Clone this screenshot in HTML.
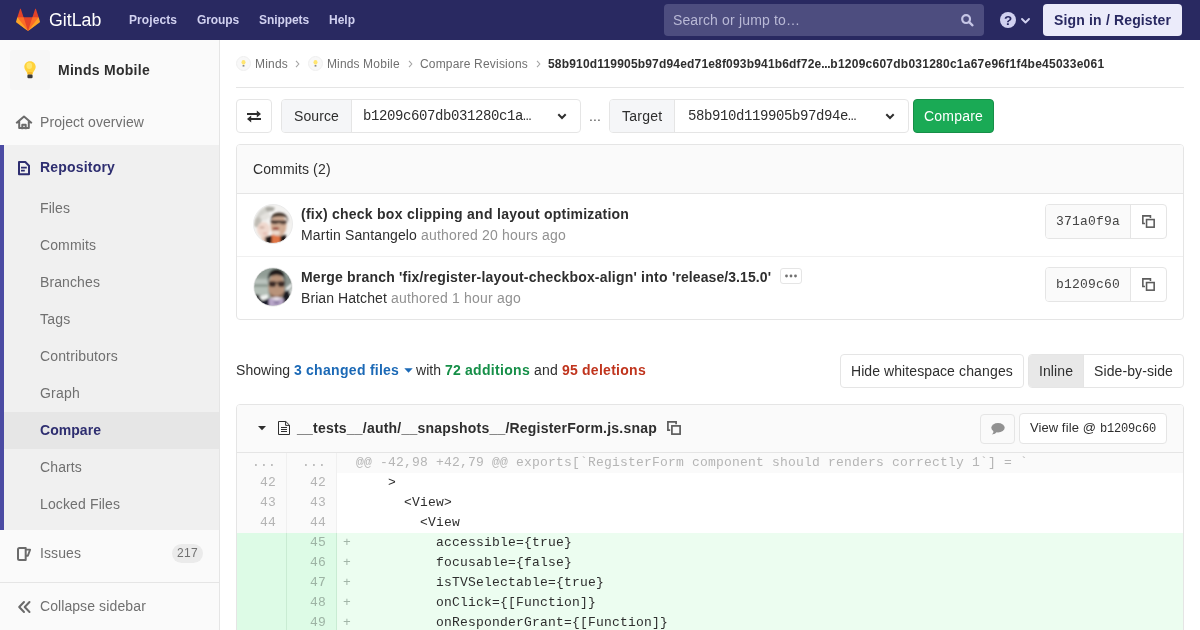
<!DOCTYPE html>
<html>
<head>
<meta charset="utf-8">
<title>Compare Revisions</title>
<style>
*{box-sizing:border-box;margin:0;padding:0}
html,body{width:1200px;height:630px;overflow:hidden;background:#fff}
body{font-family:"Liberation Sans",sans-serif;font-size:14px;color:#2e2e2e;position:relative}
.mono{font-family:"Liberation Mono",monospace}
svg{position:absolute;display:block;overflow:visible}
#hdr{position:absolute;left:0;top:0;width:1200px;height:40px;background:#292961}
#hdr .nav{position:absolute;top:0;height:40px;line-height:40px;font-size:12px;font-weight:bold;color:#d1d1f0;white-space:nowrap}
#logo-text{position:absolute;left:49px;top:0;height:40px;line-height:40.400px;font-size:19.200px;color:#fff;white-space:nowrap;transform:scaleX(0.925);transform-origin:0 0}
#search{position:absolute;left:664px;top:4px;width:320px;height:32px;border-radius:4px;background:#4d4d7f;color:#b9b9d6;font-size:14px;line-height:32px;padding-left:9px;white-space:nowrap}
#signin{position:absolute;left:1043px;top:4px;width:139px;height:32px;border-radius:4px;background:#ebebfa;color:#292961;font-size:14px;font-weight:bold;line-height:32px;text-align:center;white-space:nowrap}
#side{position:absolute;left:0;top:40px;width:220px;height:590px;background:#fafafa;border-right:1px solid #e5e5e5}
#side .it{position:absolute;left:40px;font-size:14px;color:#707070;white-space:nowrap;line-height:20px;height:20px}
#active{position:absolute;left:0;top:105px;width:219px;height:385px;background:#f0f0f0;border-left:4px solid #4b4ba3}
#sel{position:absolute;left:4px;top:372px;width:215px;height:37px;background:#e6e6e6}
.t{position:absolute;white-space:nowrap;line-height:20px;height:20px}
.box{position:absolute;border:1px solid #e5e5e5;border-radius:4px;background:#fff}
.btn{position:absolute;border:1px solid #e5e5e5;border-radius:4px;background:#fff;white-space:nowrap;text-align:center}
.ln{position:absolute;width:50px;height:20px;line-height:20px;text-align:right;padding-right:10px;font-family:"Liberation Mono",monospace;font-size:13px;letter-spacing:0.2px;color:#b4b4b4;background:#fafafa;border-right:1px solid #f0f0f0;white-space:pre}
.ln.new{background:#ddfbe6;border-right-color:#c9ecd3;color:#9db3a4}
.lc{position:absolute;left:337px;width:846px;height:20px;line-height:20px;font-family:"Liberation Mono",monospace;font-size:13px;letter-spacing:0.2px;color:#2e2e2e;white-space:pre;padding-left:19px;background:#fff}
.lc.new{background:#ecfdf0}
.lc.match{background:#fafafa;color:#b5b5b5}
.lc .pl{position:absolute;left:6px;top:0;color:#a3b5a8}
</style>
</head>
<body>
<div id="wrap" style="position:absolute;left:0;top:0;width:1200px;height:630px;will-change:transform">
<!-- ============ HEADER ============ -->
<div id="hdr">
  <svg style="left:16px;top:8px" width="24" height="24" viewBox="0 0 36 36">
    <path fill="#e24329" d="M2 14l9.38 9v-9l-4-12.28c-.205-.632-1.176-.632-1.38 0z"/>
    <path fill="#e24329" d="M34 14l-9.38 9v-9l4-12.28c.205-.632 1.176-.632 1.38 0z"/>
    <path fill="#e24329" d="M18,34.38 3,14 33,14 Z"/>
    <path fill="#fc6d26" d="M18,34.38 11.38,14 2,14 6,25Z"/>
    <path fill="#fc6d26" d="M18,34.38 24.62,14 34,14 30,25Z"/>
    <path fill="#fca326" d="M2 14L.1 20.16c-.18.565 0 1.2.5 1.56l17.42 12.66z"/>
    <path fill="#fca326" d="M34 14l1.9 6.16c.18.565 0 1.2-.5 1.56L18 34.38z"/>
  </svg>
  <div id="logo-text">GitLab</div>
  <div class="nav" style="left:129px"><span style="letter-spacing:0.081px">Projects</span></div>
  <div class="nav" style="left:197px"><span style="letter-spacing:-0.111px">Groups</span></div>
  <div class="nav" style="left:259px"><span style="letter-spacing:-0.084px">Snippets</span></div>
  <div class="nav" style="left:329px"><span style="letter-spacing:-0.001px">Help</span></div>
  <div id="search"><span style="letter-spacing:0.107px">Search </span><span style="letter-spacing:0.221px">or </span><span style="letter-spacing:0.153px">jump </span><span style="letter-spacing:0.108px">to…</span></div>
  <svg style="left:961px;top:14px" width="13" height="13" viewBox="0 0 13 13"><circle cx="5.100" cy="5.100" r="3.900" fill="none" stroke="#c6c6e6" stroke-width="2.200"/><path d="M8.200 8.200l3.300 3.100" stroke="#c6c6e6" stroke-width="2.300" stroke-linecap="round"/></svg>
  <svg style="left:1000px;top:12px" width="16" height="16" viewBox="0 0 16 16"><circle cx="8" cy="8" r="8" fill="#d1d1f0"/><text x="8" y="12.900" text-anchor="middle" font-family="Liberation Sans" font-weight="bold" font-size="13.500" fill="#292961">?</text></svg>
  <svg style="left:1021px;top:18.300px" width="9" height="5.500" viewBox="0 0 9 5.500"><path d="M1 1l3.500 3.500L8 1" fill="none" stroke="#d1d1f0" stroke-width="1.900" stroke-linecap="round" stroke-linejoin="round"/></svg>
  <div id="signin"><span style="letter-spacing:0.156px">Sign </span><span style="letter-spacing:0.223px">in </span><span style="letter-spacing:0.110px">/ </span><span style="letter-spacing:0.122px">Register</span></div>
</div>

<!-- ============ SIDEBAR ============ -->
<div id="side">
  <div style="position:absolute;left:10px;top:10px;width:40px;height:40px;border-radius:3px;background:#f7f7f7;border:1px solid #f7f7f7"></div>
  <svg style="left:23px;top:20px" width="14" height="20" viewBox="0 0 14 20"><defs><filter id="fb" x="-20%" y="-20%" width="140%" height="140%"><feGaussianBlur stdDeviation="0.5"/></filter></defs><g filter="url(#fb)"><path d="M7 1.200C3.600 1.200 1.300 3.800 1.300 6.800c0 2.200 1.300 3.600 2.200 5 .5.900.7 1.600.8 2.600h5.400c.1-1 .3-1.700.8-2.600.9-1.400 2.200-2.800 2.200-5C12.700 3.800 10.400 1.200 7 1.200z" fill="#ffd23a"/><ellipse cx="6.300" cy="5.800" rx="2.800" ry="3.200" fill="#ffe66e"/><path d="M4.600 12h4.800l-.3 2.400H4.900z" fill="#f5b62a"/><rect x="4.400" y="14.600" width="5.200" height="3.700" rx="1.200" fill="#3a3a3a"/></g></svg>
  <div class="it" style="top:20px;left:58px;font-weight:bold;color:#2e2e2e"><span style="letter-spacing:0.278px">Minds </span><span style="letter-spacing:0.278px">Mobile</span></div>

  <svg style="left:16px;top:74px" width="16" height="16" viewBox="0 0 16 16"><path d="M1 8.600L8 2.600l7 6M3.200 8V14h9.600V8M6.300 14.200v-3.400h3.400v3.400" fill="none" stroke="#6b6b6b" stroke-width="2" stroke-linejoin="round" stroke-linecap="square"/></svg>
  <div class="it" style="top:72px"><span style="letter-spacing:0.067px">Project </span><span style="letter-spacing:0.095px">overview</span></div>

  <div id="active"></div>
  <div id="sel"></div>
  <svg style="left:17px;top:121px" width="14" height="15" viewBox="0 0 14 15"><path d="M2 1h6.300l3.700 3.700V13.200H2z" fill="none" stroke="#2e2e70" stroke-width="2" stroke-linejoin="round"/><path d="M4 6.600h5.800M4 9.600h3.800" stroke="#2e2e70" stroke-width="1.900"/></svg>
  <div class="it" style="top:117px;font-weight:bold;color:#2e2e70"><span style="letter-spacing:0.188px">Repository</span></div>
  <div class="it" style="top:158px"><span style="letter-spacing:0.088px">Files</span></div>
  <div class="it" style="top:195px"><span style="letter-spacing:0.111px">Commits</span></div>
  <div class="it" style="top:232px"><span style="letter-spacing:0.107px">Branches</span></div>
  <div class="it" style="top:269px"><span style="letter-spacing:0.219px">Tags</span></div>
  <div class="it" style="top:306px"><span style="letter-spacing:0.145px">Contributors</span></div>
  <div class="it" style="top:343px"><span style="letter-spacing:0.218px">Graph</span></div>
  <div class="it" style="top:380px;font-weight:bold;color:#2e2e70"><span style="letter-spacing:0.045px">Compare</span></div>
  <div class="it" style="top:417px"><span style="letter-spacing:0.128px">Charts</span></div>
  <div class="it" style="top:454px"><span style="letter-spacing:0.138px">Locked </span><span style="letter-spacing:0.088px">Files</span></div>

  <svg style="left:17px;top:507px" width="15" height="14" viewBox="0 0 15 14"><path d="M1 2.500Q1 1 2.500 1h6.200v12H2.500Q1 13 1 11.500z" fill="none" stroke="#6b6b6b" stroke-width="2" stroke-linejoin="round"/><path d="M8.700 2.600h4.400l-2.200 6.200H8.700" fill="none" stroke="#6b6b6b" stroke-width="1.900" stroke-linejoin="round"/></svg>
  <div class="it" style="top:503px"><span style="letter-spacing:0.090px">Issues</span></div>
  <div style="position:absolute;left:172px;top:504px;width:31px;height:19px;border-radius:10px;background:#ebebeb;color:#707070;font-size:12px;line-height:19px;text-align:center"><span style="letter-spacing:0.326px">217</span></div>

  <div style="position:absolute;left:0;top:542px;width:219px;height:1px;background:#e5e5e5"></div>
  <svg style="left:18px;top:561px" width="13" height="12" viewBox="0 0 13 12"><path d="M6 1L1.200 6 6 11M11.500 1L6.700 6l4.800 5" fill="none" stroke="#6b6b6b" stroke-width="2" stroke-linecap="round" stroke-linejoin="round"/></svg>
  <div class="it" style="top:556px"><span style="letter-spacing:0.071px">Collapse </span><span style="letter-spacing:0.155px">sidebar</span></div>
</div>

<!-- ============ BREADCRUMBS ============ -->
<div style="position:absolute;left:236px;top:87px;width:948px;height:1px;background:#e5e5e5"></div>
<svg style="left:236px;top:56px" width="15" height="15" viewBox="0 0 15 15"><circle cx="7.500" cy="7.500" r="7" fill="#f8f8f8" stroke="#efefef" stroke-width="1"/><ellipse cx="7.500" cy="6.300" rx="2" ry="2.400" fill="#ffe570"/><rect x="6.600" y="9" width="1.800" height="1.600" fill="#8a8a8a"/></svg>
<div class="t" style="left:255px;top:54px;font-size:12px;color:#707070"><span style="letter-spacing:0.198px">Minds</span></div>
<svg style="left:295px;top:60px" width="5" height="8" viewBox="0 0 5 8"><path d="M1 0.800L3.800 4 1 7.200" fill="none" stroke="#a4a4a4" stroke-width="1.100"/></svg>
<svg style="left:308px;top:56px" width="15" height="15" viewBox="0 0 15 15"><circle cx="7.500" cy="7.500" r="7" fill="#f8f8f8" stroke="#efefef" stroke-width="1"/><ellipse cx="7.500" cy="6.300" rx="2" ry="2.400" fill="#ffe570"/><rect x="6.600" y="9" width="1.800" height="1.600" fill="#8a8a8a"/></svg>
<div class="t" style="left:327px;top:54px;font-size:12px;color:#707070"><span style="letter-spacing:0.109px">Minds </span><span style="letter-spacing:0.275px">Mobile</span></div>
<svg style="left:408px;top:60px" width="5" height="8" viewBox="0 0 5 8"><path d="M1 0.800L3.800 4 1 7.200" fill="none" stroke="#a4a4a4" stroke-width="1.100"/></svg>
<div class="t" style="left:420px;top:54px;font-size:12px;color:#707070"><span style="letter-spacing:0.164px">Compare </span><span style="letter-spacing:0.220px">Revisions</span></div>
<svg style="left:536px;top:60px" width="5" height="8" viewBox="0 0 5 8"><path d="M1 0.800L3.800 4 1 7.200" fill="none" stroke="#a4a4a4" stroke-width="1.100"/></svg>
<div class="t" style="left:548px;top:54px;font-size:12px;color:#2e2e2e;font-weight:bold"><span style="letter-spacing:0.179px">58b910d119905b97d94ed71e8f093b941b6df72e</span><span style="letter-spacing:-0.334px">...</span><span style="letter-spacing:0.244px">b1209c607db031280c1a67e96f1f4be45033e061</span></div>

<!-- ============ COMPARE FORM ============ -->
<div class="btn" style="left:236px;top:99px;width:36px;height:34px"></div>
<svg style="left:247px;top:110px" width="14" height="13" viewBox="0 0 14 13"><path d="M0 3h10.500v2H0zM9.800 0.500L14 4 9.800 7.500zM14 8H3.500v2H14zM4.200 5.500L0 9l4.200 3.500z" fill="#2e2e2e"/></svg>
<div class="box" style="left:281px;top:99px;width:300px;height:34px"></div>
<div style="position:absolute;left:282px;top:100px;width:70px;height:32px;background:#f5f6f8;border-right:1px solid #e5e5e5;border-radius:3px 0 0 3px"></div>
<div class="t" style="left:294px;top:106px"><span style="letter-spacing:0.107px">Source</span></div>
<div class="t mono" style="left:363px;top:106px;font-size:14px;letter-spacing:-0.4px">b1209c607db031280c1a…</div>
<svg style="left:557px;top:113px" width="10" height="7" viewBox="0 0 10 7"><path d="M1.300 1.300L5 5 8.700 1.300" fill="none" stroke="#2e2e2e" stroke-width="2" stroke-linejoin="miter"/></svg>
<div class="t" style="left:589px;top:106px;color:#555"><span style="letter-spacing:0.110px">...</span></div>
<div class="box" style="left:609px;top:99px;width:300px;height:34px"></div>
<div style="position:absolute;left:610px;top:100px;width:65px;height:32px;background:#f5f6f8;border-right:1px solid #e5e5e5;border-radius:3px 0 0 3px"></div>
<div class="t" style="left:622px;top:106px"><span style="letter-spacing:0.256px">Target</span></div>
<div class="t mono" style="left:688px;top:106px;font-size:14px;letter-spacing:-0.4px">58b910d119905b97d94e…</div>
<svg style="left:885px;top:113px" width="10" height="7" viewBox="0 0 10 7"><path d="M1.300 1.300L5 5 8.700 1.300" fill="none" stroke="#2e2e2e" stroke-width="2" stroke-linejoin="miter"/></svg>
<div class="btn" style="left:913px;top:99px;width:81px;height:34px;background:#1aaa55;border-color:#168f48;color:#fff;line-height:32px"><span style="letter-spacing:0.203px">Compare</span></div>

<!-- ============ COMMITS ============ -->
<div class="box" style="left:236px;top:144px;width:948px;height:176px"></div>
<div style="position:absolute;left:237px;top:145px;width:946px;height:49px;background:#fafafa;border-bottom:1px solid #e5e5e5;border-radius:3px 3px 0 0"></div>
<div class="t" style="left:253px;top:159px"><span style="letter-spacing:0.111px">Commits </span><span style="letter-spacing:0.297px">(2)</span></div>
<div style="position:absolute;left:237px;top:256px;width:946px;height:1px;background:#f0f0f0"></div>

<!--AVATAR1--><svg style="left:253px;top:204px" width="40" height="40" viewBox="0 0 40 40"><defs><clipPath id="c1"><circle cx="20" cy="20" r="19.500"/></clipPath><filter id="f1" x="-10%" y="-10%" width="120%" height="120%"><feGaussianBlur stdDeviation="0.900"/></filter></defs>
<g clip-path="url(#c1)"><rect width="40" height="40" fill="#f3f2f0"/><g filter="url(#f1)">
<path d="M3 13Q7 4 15 2L22 4 15 9 9 17 4 22z" fill="#d2d1cc"/>
<path d="M12 4Q17 1.500 22 4L20 7 14 7.500z" fill="#a9a7a0"/>
<path d="M2 15L7 12 8 19 5 24 1 22z" fill="#bdbab2"/>
<path d="M6 13L14 8 18 12 12 17z" fill="#e4e2de"/>
<ellipse cx="10.500" cy="25.500" rx="6.400" ry="7.500" fill="#efd8ce"/>
<ellipse cx="9" cy="23.500" rx="2.600" ry="0.900" fill="#c8a597"/>
<ellipse cx="12" cy="29.500" rx="2.400" ry="1" fill="#e0b0a6"/>
<path d="M8 33L16 31 17 40H11z" fill="#e8c8b8"/>
<path d="M12 33.500Q16 31 20 32V40H13z" fill="#1b1918"/>
<path d="M26 32L33 30.500 33 37 27 40z" fill="#1b1918"/>
<path d="M18.500 40L19 30 27 29.500 27.500 37 25 40z" fill="#e07444"/>
<ellipse cx="25.500" cy="21.500" rx="8" ry="10.800" fill="#d3ae96"/>
<path d="M17.500 16Q18 8.500 26.500 8.500 35 9 35.500 18.500L33 13.500Q27 11.500 20 13.500z" fill="#43342c"/>
<path d="M17.800 16L33.500 16.500 33.500 19.500Q29.500 21.500 26 19 22 21.500 17.800 19z" fill="#4f3d36"/>
<ellipse cx="22.800" cy="24.600" rx="3.300" ry="1.500" fill="#9a4a3c"/>
<ellipse cx="23" cy="28.800" rx="4" ry="2.300" fill="#ecdacd"/>
</g></g><circle cx="20" cy="20" r="19.500" fill="none" stroke="#ebebeb" stroke-width="1"/></svg><!--/AVATAR1-->
<div class="t" style="left:301px;top:204px;font-weight:bold"><span style="letter-spacing:0.241px">(fix) </span><span style="letter-spacing:0.236px">check </span><span style="letter-spacing:0.305px">box </span><span style="letter-spacing:0.272px">clipping </span><span style="letter-spacing:0.305px">and </span><span style="letter-spacing:0.269px">layout </span><span style="letter-spacing:0.214px">optimization</span></div>
<div class="t" style="left:301px;top:225px"><span style="letter-spacing:0.173px">Martin </span><span style="letter-spacing:0.115px">Santangelo </span><span style="color:#919191"><span style="letter-spacing:0.205px">authored </span><span style="letter-spacing:0.179px">20 </span><span style="letter-spacing:0.182px">hours </span><span style="letter-spacing:0.214px">ago</span></span></div>
<!--AVATAR2--><svg style="left:253px;top:267px" width="40" height="40" viewBox="0 0 40 40"><defs><clipPath id="c2"><circle cx="20" cy="20" r="19"/></clipPath><filter id="f2" x="-10%" y="-10%" width="120%" height="120%"><feGaussianBlur stdDeviation="0.900"/></filter></defs>
<g clip-path="url(#c2)"><rect width="40" height="40" fill="#9aa59e"/><g filter="url(#f2)">
<rect x="0" y="0" width="40" height="9" fill="#919d96"/>
<rect x="0" y="12" width="16" height="5" fill="#b9c3bd"/>
<rect x="0" y="20" width="15" height="8" fill="#b5c0b8"/>
<rect x="0" y="17" width="15" height="3" fill="#909c94"/>
<path d="M31 10L40 8V30L32 32z" fill="#87928d"/>
<path d="M33 21L39 16V19.500L33.500 24.500zM33.500 26.500L39 21.500V25L34 29.500z" fill="#eef1f0"/>
<path d="M2 27L9 29 14 35 9 40 0 35z" fill="#15161a"/>
<path d="M6 29L15 27.500 15.500 32 9 33.500z" fill="#f2f4f2"/>
<path d="M7 35L16 31 20 40H9z" fill="#1c1f2d"/>
<path d="M30 25L36 23 38 34 29 40z" fill="#1c1e23"/>
<ellipse cx="23.500" cy="20" rx="8.200" ry="13" fill="#b8937a"/>
<path d="M14.800 15Q14 2.500 23.500 2 33 2.500 32.200 15L30.500 9.500Q23.500 6.500 16.500 9.500z" fill="#221e1c"/>
<ellipse cx="19.500" cy="17" rx="3.700" ry="3.100" fill="#3a2b27"/>
<ellipse cx="28.300" cy="17" rx="3.700" ry="3.100" fill="#3a2b27"/>
<rect x="15" y="14.800" width="17.500" height="1.300" fill="#46362f"/>
<path d="M17 25.500Q23.500 33 30 25.500L28.500 30.500Q23.500 33.500 18.500 30.500z" fill="#7d5f4e"/>
<path d="M15.500 32L23.500 30 31 32 30 40H16z" fill="#b7a6c8"/>
<path d="M17 31L23.500 30 30 31 23.500 33.500z" fill="#e9e2ea"/>
<path d="M21 34h5v3h-5z" fill="#8f7fa6"/>
</g></g><circle cx="20" cy="20" r="19.200" fill="none" stroke="#e4e4e4" stroke-width="0.800"/></svg><!--/AVATAR2-->
<div class="t" style="left:301px;top:267px;font-weight:bold"><span style="letter-spacing:0.146px">Merge </span><span style="letter-spacing:0.205px">branch </span><span style="letter-spacing:0.200px">'fix/register-layout-checkbox-align' </span><span style="letter-spacing:0.291px">into </span><span style="letter-spacing:0.079px">'release/3.15.0'</span></div>
<div class="btn" style="left:780px;top:268px;width:22px;height:16px;border-radius:3px"></div>
<svg style="left:784px;top:274px" width="14" height="4" viewBox="0 0 14 4"><circle cx="2.500" cy="2" r="1.400" fill="#707070"/><circle cx="7" cy="2" r="1.400" fill="#707070"/><circle cx="11.500" cy="2" r="1.400" fill="#707070"/></svg>
<div class="t" style="left:301px;top:288px"><span style="letter-spacing:0.071px">Brian </span><span style="letter-spacing:0.108px">Hatchet </span><span style="color:#919191"><span style="letter-spacing:0.205px">authored </span><span style="letter-spacing:0.162px">1 </span><span style="letter-spacing:0.218px">hour </span><span style="letter-spacing:0.214px">ago</span></span></div>

<div class="btn" style="left:1045px;top:204px;width:122px;height:35px"></div>
<div style="position:absolute;left:1046px;top:205px;width:85px;height:33px;background:#fafafa;border-right:1px solid #e5e5e5;border-radius:3px 0 0 3px"></div>
<div class="t mono" style="left:1056px;top:212px;font-size:13px;letter-spacing:0.2px;color:#444">371a0f9a</div>
<svg style="left:1142px;top:215px" width="13" height="13" viewBox="0 0 14 14"><path d="M3.200 9.100H0.900V0.900h8.200v2.300" fill="none" stroke="#5c5c5c" stroke-width="1.700"/><rect x="4.900" y="4.900" width="8.200" height="8.200" fill="none" stroke="#5c5c5c" stroke-width="1.700"/></svg>
<div class="btn" style="left:1045px;top:267px;width:122px;height:35px"></div>
<div style="position:absolute;left:1046px;top:268px;width:85px;height:33px;background:#fafafa;border-right:1px solid #e5e5e5;border-radius:3px 0 0 3px"></div>
<div class="t mono" style="left:1056px;top:275px;font-size:13px;letter-spacing:0.2px;color:#444">b1209c60</div>
<svg style="left:1142px;top:278px" width="13" height="13" viewBox="0 0 14 14"><path d="M3.200 9.100H0.900V0.900h8.200v2.300" fill="none" stroke="#5c5c5c" stroke-width="1.700"/><rect x="4.900" y="4.900" width="8.200" height="8.200" fill="none" stroke="#5c5c5c" stroke-width="1.700"/></svg>

<!-- ============ STATS ============ -->
<div class="t" style="left:236px;top:360px"><span style="letter-spacing:0.051px">Showing </span></div>
<div class="t" style="left:294px;top:360px;font-weight:bold;color:#1b69b6"><span style="letter-spacing:0.162px">3 </span><span style="letter-spacing:0.318px">changed </span><span style="letter-spacing:0.197px">files</span></div>
<svg style="left:404px;top:368px" width="9" height="5" viewBox="0 0 9 5"><path d="M0.300 0.300h8.400L4.500 4.700z" fill="#1b69b6"/></svg>
<div class="t" style="left:416px;top:360px"><span style="letter-spacing:0.043px">with </span></div>
<div class="t" style="left:445px;top:360px;font-weight:bold;color:#168f48"><span style="letter-spacing:0.179px">72 </span><span style="letter-spacing:0.309px">additions</span></div>
<div class="t" style="left:534px;top:360px"><span style="letter-spacing:0.188px">and </span></div>
<div class="t" style="left:562px;top:360px;font-weight:bold;color:#c0341d"><span style="letter-spacing:0.179px">95 </span><span style="letter-spacing:0.283px">deletions</span></div>
<div class="btn" style="left:840px;top:354px;width:184px;height:34px;line-height:32px"><span style="letter-spacing:0.063px">Hide </span><span style="letter-spacing:0.097px">whitespace </span><span style="letter-spacing:0.153px">changes</span></div>
<div class="btn" style="left:1028px;top:354px;width:156px;height:34px"></div>
<div style="position:absolute;left:1029px;top:355px;width:55px;height:32px;background:#e8e8e8;border-right:1px solid #e5e5e5;border-radius:3px 0 0 3px"></div>
<div class="t" style="left:1039px;top:361px"><span style="letter-spacing:0.089px">Inline</span></div>
<div class="t" style="left:1094px;top:361px"><span style="letter-spacing:0.099px">Side-by-side</span></div>

<!-- ============ FILE ============ -->
<div class="box" style="left:236px;top:404px;width:948px;height:260px;border-radius:4px 4px 0 0"></div>
<div style="position:absolute;left:237px;top:405px;width:946px;height:48px;background:#fafafa;border-bottom:1px solid #e5e5e5;border-radius:3px 3px 0 0"></div>
<svg style="left:258px;top:426px" width="8" height="4" viewBox="0 0 8 4"><path d="M0 0h8L4 4.200z" fill="#2e2e2e"/></svg>
<svg style="left:278px;top:421px" width="12" height="14" viewBox="0 0 12 14"><path d="M0.500 0.500H7.800L11.500 4.200V13.500H0.500z" fill="none" stroke="#2e2e2e" stroke-width="1"/><path d="M7.600 0.600V4.400H11.400" fill="none" stroke="#2e2e2e" stroke-width="1"/><path d="M3 6.500h6M3 8.500h6M3 10.500h6" stroke="#2e2e2e" stroke-width="1"/></svg>
<div class="t" style="left:297px;top:418px;font-weight:bold"><span style="letter-spacing:0.217px">__tests__/auth/__snapshots__/RegisterForm.js.snap</span></div>
<svg style="left:667px;top:421px" width="14" height="14" viewBox="0 0 14 14"><path d="M3.200 9.100H0.900V0.900h8.200v2.300" fill="none" stroke="#5c5c5c" stroke-width="1.700"/><rect x="4.900" y="4.900" width="8.200" height="8.200" fill="none" stroke="#5c5c5c" stroke-width="1.700"/></svg>
<div class="btn" style="left:980px;top:414px;width:35px;height:30px;background:#fafafa"></div>
<svg style="left:991px;top:423px" width="14" height="12" viewBox="0 0 14 12"><ellipse cx="7" cy="4.800" rx="6.700" ry="4.700" fill="#919191"/><path d="M2.500 7.500Q2.800 10 0.800 11.600 4.500 11.300 6 8.800z" fill="#919191"/></svg>
<div class="btn" style="left:1019px;top:413px;width:148px;height:31px;font-size:13px;line-height:27px"><span style="letter-spacing:0.042px">View </span><span style="letter-spacing:0.154px">file </span><span style="letter-spacing:0.096px">@ </span><span class="mono" style="font-size:12px;letter-spacing:-0.2px">b1209c60</span></div>

<div class="ln" style="left:237px;top:453px">...</div><div class="ln" style="left:287px;top:453px">...</div><div class="lc match" style="top:453px">@@ -42,98 +42,79 @@ exports[`RegisterForm component should renders correctly 1`] = `</div>
<div class="ln" style="left:237px;top:473px">42</div><div class="ln" style="left:287px;top:473px">42</div><div class="lc" style="top:473px">    &gt;</div>
<div class="ln" style="left:237px;top:493px">43</div><div class="ln" style="left:287px;top:493px">43</div><div class="lc" style="top:493px">      &lt;View&gt;</div>
<div class="ln" style="left:237px;top:513px">44</div><div class="ln" style="left:287px;top:513px">44</div><div class="lc" style="top:513px">        &lt;View</div>
<div class="ln new" style="left:237px;top:533px"></div><div class="ln new" style="left:287px;top:533px">45</div><div class="lc new" style="top:533px"><span class="pl">+</span>          accessible={true}</div>
<div class="ln new" style="left:237px;top:553px"></div><div class="ln new" style="left:287px;top:553px">46</div><div class="lc new" style="top:553px"><span class="pl">+</span>          focusable={false}</div>
<div class="ln new" style="left:237px;top:573px"></div><div class="ln new" style="left:287px;top:573px">47</div><div class="lc new" style="top:573px"><span class="pl">+</span>          isTVSelectable={true}</div>
<div class="ln new" style="left:237px;top:593px"></div><div class="ln new" style="left:287px;top:593px">48</div><div class="lc new" style="top:593px"><span class="pl">+</span>          onClick={[Function]}</div>
<div class="ln new" style="left:237px;top:613px"></div><div class="ln new" style="left:287px;top:613px">49</div><div class="lc new" style="top:613px"><span class="pl">+</span>          onResponderGrant={[Function]}</div>
</div>
</body>
</html>
